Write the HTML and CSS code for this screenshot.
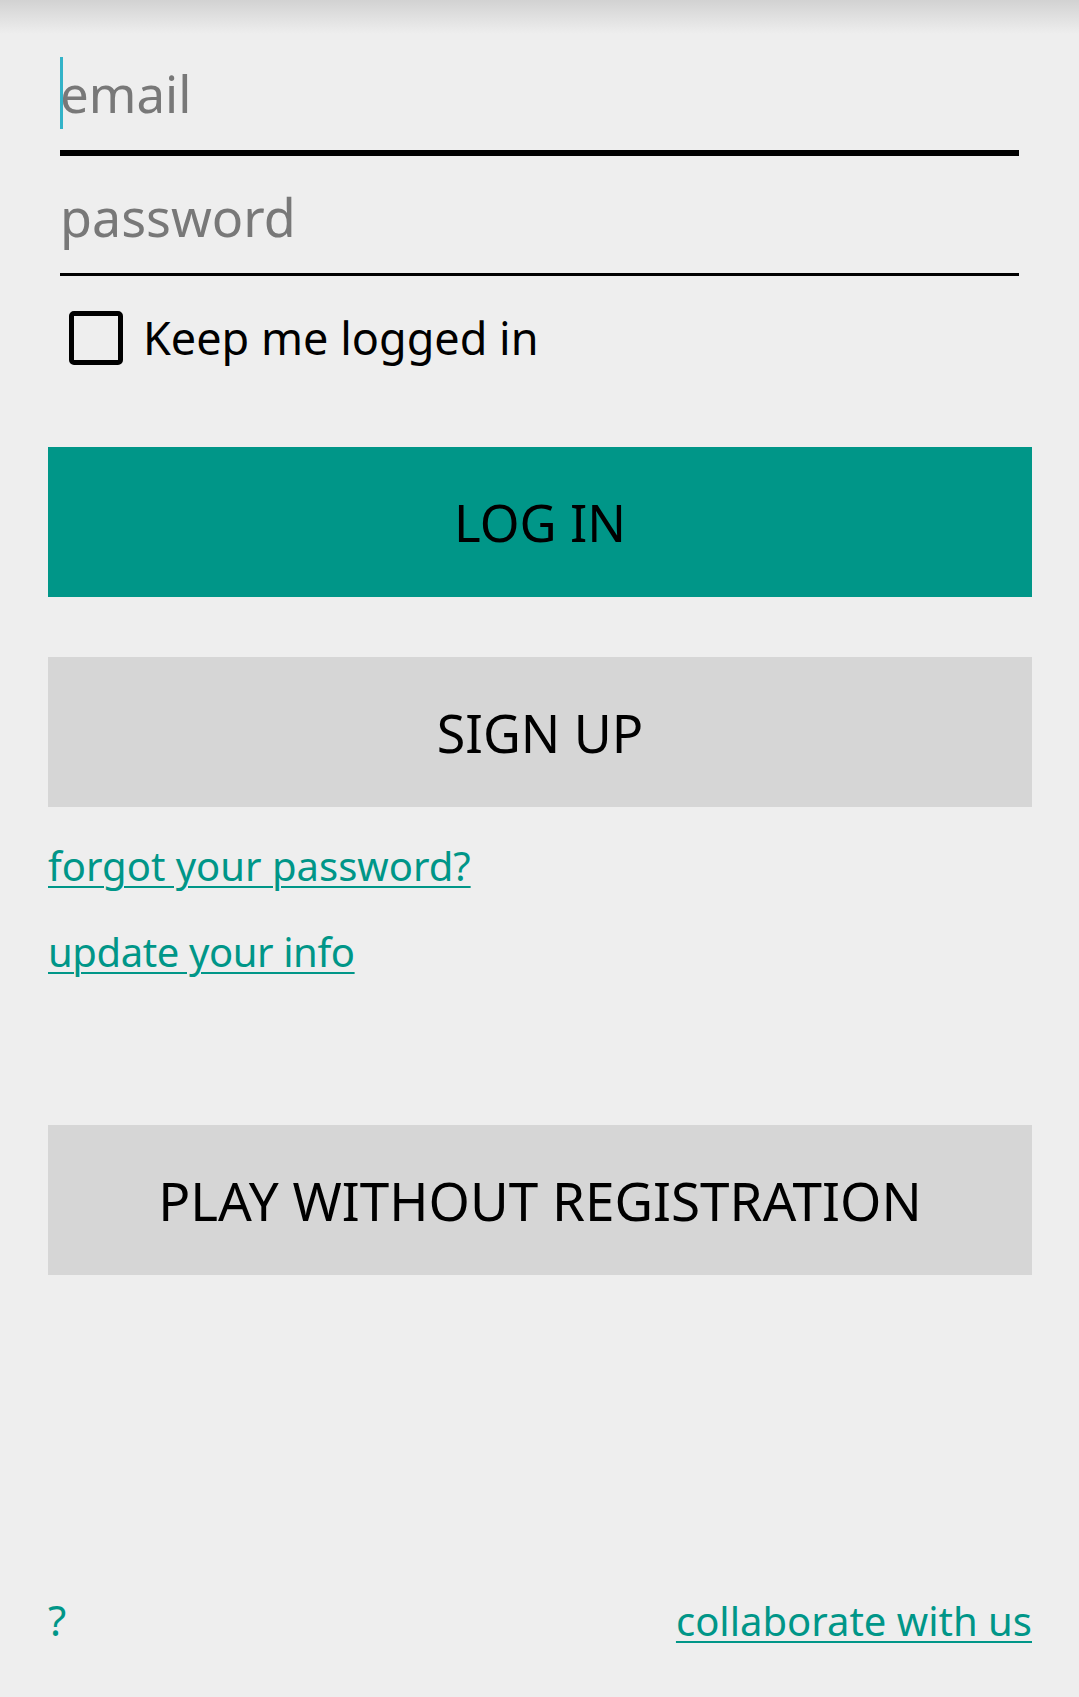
FILE: index.html
```html
<!DOCTYPE html>
<html lang="en">
<head>
<meta charset="utf-8">
<title>Log in</title>
<link rel="stylesheet" href="styles.css">
</head>
<body>
<div class="page">
  <div class="field field-focused">
    <span class="caret"></span>
    <span class="placeholder">email</span>
  </div>
  <div class="field field-pass">
    <span class="placeholder">password</span>
  </div>
  <label class="check-row">
    <span class="checkbox"></span>
    <span class="check-label">Keep me logged in</span>
  </label>
  <div class="btn btn-primary">LOG IN</div>
  <div class="btn btn-gray btn-signup">SIGN UP</div>
  <a class="link link-first" href="#">forgot your password?</a>
  <a class="link link-second" href="#">update your info</a>
  <div class="btn btn-gray btn-play">PLAY WITHOUT REGISTRATION</div>
  <div class="footer">
    <span class="help">?</span>
    <a class="link link-collab" href="#">collaborate with us</a>
  </div>
</div>
</body>
</html>
```

FILE: styles.css
```css
html, body {
  margin: 0;
  padding: 0;
}
body {
  background-color: #eeeeee;
  background-image: linear-gradient(#d2d2d2, #eeeeee);
  background-repeat: no-repeat;
  background-size: 100% 34px;
  font-family: "Noto Sans", "Open Sans", sans-serif;
  color: #000;
}
.page {
  min-height: 1697px;
  box-sizing: border-box;
  padding: 0 47px 49px 48px;
  display: flex;
  flex-direction: column;
  align-items: stretch;
}
.field {
  position: relative;
  margin: 0 13px 0 12px;
  font-size: 51px;
  line-height: 70px;
  height: 70px;
}
.field-focused {
  margin-top: 58px;
  padding-bottom: 22px;
  border-bottom: 6px solid #000;
}
.field-pass {
  margin-top: 26px;
  padding-bottom: 21px;
  border-bottom: 3px solid #000;
}
.field-pass .placeholder {
  font-size: 52px;
}
.placeholder {
  color: #787878;
}
.caret {
  position: absolute;
  left: 0;
  top: -1px;
  width: 3px;
  height: 72px;
  background: #33b3c8;
}
.check-row {
  display: flex;
  align-items: center;
  margin: 35px 0 0 21px;
  gap: 20px;
}
.checkbox {
  width: 54px;
  height: 54px;
  box-sizing: border-box;
  border: 5px solid #000;
  border-radius: 5px;
  flex: none;
}
.check-label {
  font-size: 45px;
  line-height: 54px;
}
.btn {
  height: 150px;
  display: flex;
  align-items: center;
  justify-content: center;
  font-size: 51px;
  color: #000;
}
.btn-primary {
  margin-top: 82px;
  background: #009688;
}
.btn-gray {
  background: #d6d6d6;
}
.btn-signup {
  margin-top: 60px;
  font-size: 52px;
}
.link {
  color: #009688;
  font-size: 40px;
  line-height: 54px;
  text-decoration: underline;
  text-decoration-thickness: 2px;
  text-underline-offset: 5px;
  align-self: flex-start;
}
.link-first {
  margin-top: 32px;
}
.link-second {
  margin-top: 32px;
  letter-spacing: -0.4px;
}
.btn-play {
  margin-top: 146px;
  font-size: 53px;
}
.footer {
  margin-top: auto;
  display: flex;
  justify-content: space-between;
  align-items: baseline;
}
.help {
  color: #009688;
  font-size: 42px;
  line-height: 54px;
}
.link-collab {
  align-self: auto;
}
```
